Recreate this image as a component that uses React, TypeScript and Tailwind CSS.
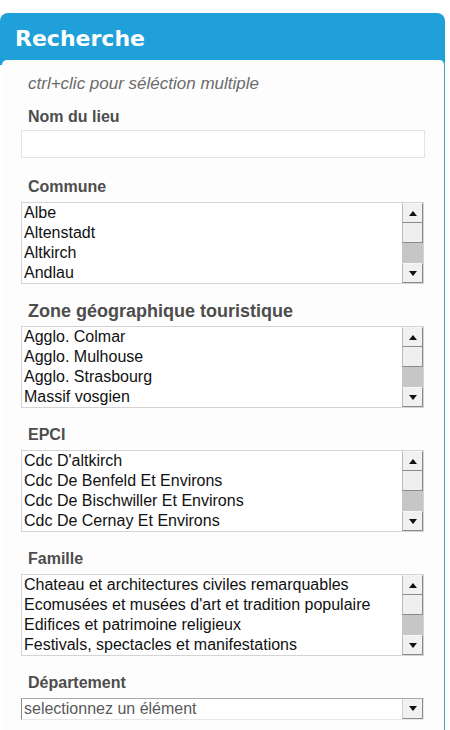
import React from "react"

type Section = { label: string; items: string[]; wide?: boolean }

const sections: Section[] = [
  { label: "Commune", items: ["Albe", "Altenstadt", "Altkirch", "Andlau"] },
  {
    label: "Zone géographique touristique",
    items: ["Agglo. Colmar", "Agglo. Mulhouse", "Agglo. Strasbourg", "Massif vosgien"],
    wide: true,
  },
  {
    label: "EPCI",
    items: [
      "Cdc D'altkirch",
      "Cdc De Benfeld Et Environs",
      "Cdc De Bischwiller Et Environs",
      "Cdc De Cernay Et Environs",
    ],
  },
  {
    label: "Famille",
    items: [
      "Chateau et architectures civiles remarquables",
      "Ecomusées et musées d'art et tradition populaire",
      "Edifices et patrimoine religieux",
      "Festivals, spectacles et manifestations",
    ],
  },
]

function Arrow({ up }: { up?: boolean }) {
  return (
    <svg width="8" height="5" viewBox="0 0 8 5" className="block">
      {up ? <polygon points="0,5 8,5 4,0" fill="#111" /> : <polygon points="0,0 8,0 4,5" fill="#111" />}
    </svg>
  )
}

function ScrollButton({ up }: { up?: boolean }) {
  return (
    <div className="h-[20px] flex items-center justify-center bg-[#f1f1f1] border-l border-l-[#b9b9b9] border-t border-t-[#f8f8f8] border-r border-r-[#8a8a8a] border-b border-b-[#8a8a8a]">
      <Arrow up={up} />
    </div>
  )
}

function Label({ children, wide }: { children: React.ReactNode; wide?: boolean }) {
  return (
    <div className={"pl-[7px] leading-[20px] font-bold text-[#4d4d4d] " + (wide ? "text-[18px]" : "text-[16px]")}>
      {children}
    </div>
  )
}

function ListBox({ items }: { items: string[] }) {
  return (
    <div className="mt-[5px] w-[403px] h-[82px] border border-[#d4d4d4] bg-white flex">
      <div className="flex-1 pl-[2px] text-[16px] leading-[20px] text-[#111]">
        {items.map((it) => (
          <div key={it} className="h-[20px] whitespace-nowrap">{it}</div>
        ))}
      </div>
      <div className="w-[21px] flex flex-col">
        <ScrollButton up />
        <div className="h-[20px] bg-[#efefef] border-l border-l-[#b9b9b9] border-r border-r-[#8a8a8a] border-b border-b-[#8a8a8a]" />
        <div className="h-[20px] bg-[#c6c6c6]" />
        <ScrollButton />
      </div>
    </div>
  )
}

export default function App() {
  return (
    <div className="w-[450px] h-[730px] overflow-hidden bg-white pt-[13px] font-['Liberation_Sans',Arial,sans-serif]">
      <div className="w-[445px] h-[52px] rounded-t-[8px] bg-[#1fa0d9] pl-[15px] pt-[13px]">
        <div className="font-['DejaVu_Sans',Verdana,sans-serif] font-bold text-[22px] leading-[26px] text-white">
          Recherche
        </div>
      </div>
      <div className="-mt-[5px] ml-[2px] w-[443px] h-[700px] rounded-t-[5px] bg-[#fdfdfd] border-r border-r-[#3ba5cc] pl-[19px] pt-[14px]">
        <div className="pl-[7px] italic text-[17px] leading-[20px] text-[#6b6b6b]">ctrl+clic pour séléction multiple</div>

        <div className="mt-[13px]">
          <Label>Nom du lieu</Label>
          <div className="mt-[3px] w-[404px] h-[28px] border border-[#e4e4e4] bg-white" />
        </div>

        {sections.map((s, i) => (
          <div key={s.label} className={i === 0 ? "mt-[19px]" : "mt-[17px]"}>
            <Label wide={s.wide}>{s.label}</Label>
            <ListBox items={s.items} />
          </div>
        ))}

        <div className="mt-[17px]">
          <Label>Département</Label>
          <div className="mt-[5px] w-[403px] h-[22px] flex border-t border-t-[#a8a8a8] border-l border-l-[#8a8a8a] border-r border-r-[#e8e8e8] border-b border-b-[#e8e8e8] bg-white">
            <div className="flex-1 pl-[2px] text-[16px] leading-[20px] text-[#5a5a5a] whitespace-nowrap">selectionnez un élément</div>
            <div className="w-[21px] h-[20px] flex items-center justify-center bg-[#f1f1f1] border-l border-l-[#d0d0d0] border-r border-r-[#8a8a8a] border-b border-b-[#8a8a8a]">
              <Arrow />
            </div>
          </div>
        </div>
      </div>
    </div>
  )
}
